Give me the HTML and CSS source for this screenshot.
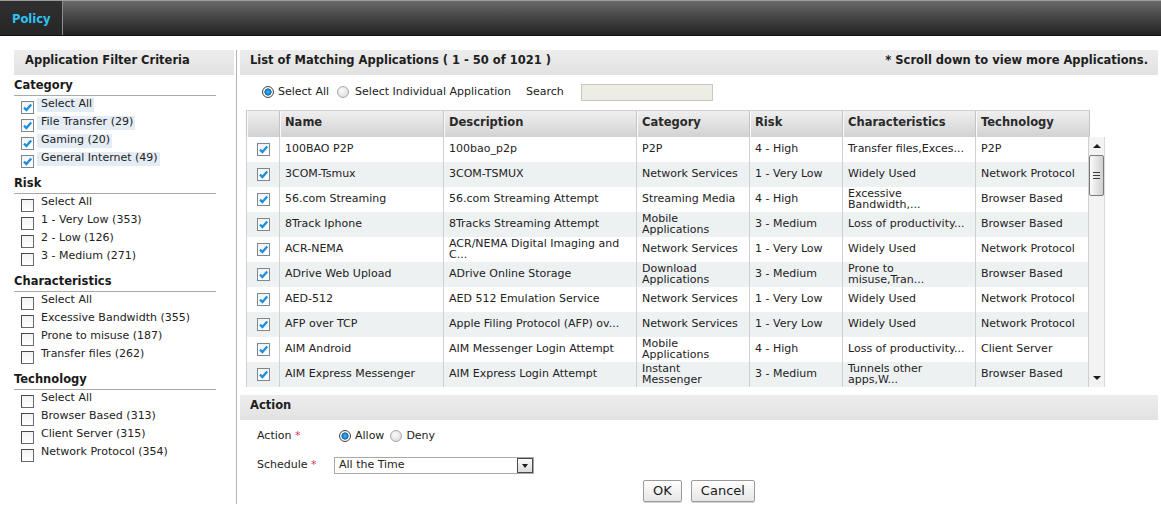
FILE: index.html
```html
<!DOCTYPE html>
<html lang="en">
<head>
<meta charset="utf-8">
<title>Policy</title>
<link rel="stylesheet" href="styles.css">
</head>
<body>
<header class="topbar">
  <div class="tab">Policy</div>
  <div class="topbar-fill"></div>
</header>
<main class="main">
  <aside class="filters">
    <div class="panel-head">Application Filter Criteria</div>

    <section class="group">
      <h3 class="group-title">Category</h3>
      <ul class="opts">
        <li class="opt"><span class="cb on"><svg viewBox="0 0 11 11" width="11" height="11"><path d="M2 5.6 L4.4 8 L9.2 2.6" /></svg></span><span class="lbl hl">Select All</span></li>
        <li class="opt"><span class="cb on"><svg viewBox="0 0 11 11" width="11" height="11"><path d="M2 5.6 L4.4 8 L9.2 2.6" /></svg></span><span class="lbl hl">File Transfer (29)</span></li>
        <li class="opt"><span class="cb on"><svg viewBox="0 0 11 11" width="11" height="11"><path d="M2 5.6 L4.4 8 L9.2 2.6" /></svg></span><span class="lbl hl">Gaming (20)</span></li>
        <li class="opt"><span class="cb on"><svg viewBox="0 0 11 11" width="11" height="11"><path d="M2 5.6 L4.4 8 L9.2 2.6" /></svg></span><span class="lbl hl">General Internet (49)</span></li>
      </ul>
    </section>

    <section class="group">
      <h3 class="group-title">Risk</h3>
      <ul class="opts">
        <li class="opt"><span class="cb"></span><span class="lbl">Select All</span></li>
        <li class="opt"><span class="cb"></span><span class="lbl">1 - Very Low (353)</span></li>
        <li class="opt"><span class="cb"></span><span class="lbl">2 - Low (126)</span></li>
        <li class="opt"><span class="cb"></span><span class="lbl">3 - Medium (271)</span></li>
      </ul>
    </section>

    <section class="group">
      <h3 class="group-title">Characteristics</h3>
      <ul class="opts">
        <li class="opt"><span class="cb"></span><span class="lbl">Select All</span></li>
        <li class="opt"><span class="cb"></span><span class="lbl">Excessive Bandwidth (355)</span></li>
        <li class="opt"><span class="cb"></span><span class="lbl">Prone to misuse (187)</span></li>
        <li class="opt"><span class="cb"></span><span class="lbl">Transfer files (262)</span></li>
      </ul>
    </section>

    <section class="group">
      <h3 class="group-title">Technology</h3>
      <ul class="opts">
        <li class="opt"><span class="cb"></span><span class="lbl">Select All</span></li>
        <li class="opt"><span class="cb"></span><span class="lbl">Browser Based (313)</span></li>
        <li class="opt"><span class="cb"></span><span class="lbl">Client Server (315)</span></li>
        <li class="opt"><span class="cb"></span><span class="lbl">Network Protocol (354)</span></li>
      </ul>
    </section>
  </aside>

  <div class="content">
    <div class="panel-head split">
      <span>List of Matching Applications ( 1 - 50 of 1021 )</span>
      <span>* Scroll down to view more Applications.</span>
    </div>

    <div class="selrow">
      <span class="radio on"></span><span class="rlbl">Select All</span>
      <span class="radio second"></span><span class="rlbl">Select Individual Application</span>
      <span class="search-lbl">Search</span>
      <span class="search-box"></span>
    </div>

    <div class="grid">
      <div class="thead">
        <div class="th"></div>
        <div class="th">Name</div>
        <div class="th">Description</div>
        <div class="th">Category</div>
        <div class="th">Risk</div>
        <div class="th">Characteristics</div>
        <div class="th last">Technology</div>
      </div>
      <div class="tbody">
        <div class="rows">
          <div class="row">
            <div class="cell ck"><span class="cb on"><svg viewBox="0 0 11 11" width="11" height="11"><path d="M2 5.6 L4.4 8 L9.2 2.6" /></svg></span></div>
            <div class="cell"><span>100BAO P2P</span></div>
            <div class="cell"><span>100bao_p2p</span></div>
            <div class="cell"><span>P2P</span></div>
            <div class="cell"><span>4 - High</span></div>
            <div class="cell"><span>Transfer files,Exces...</span></div>
            <div class="cell"><span>P2P</span></div>
          </div>
          <div class="row">
            <div class="cell ck"><span class="cb on"><svg viewBox="0 0 11 11" width="11" height="11"><path d="M2 5.6 L4.4 8 L9.2 2.6" /></svg></span></div>
            <div class="cell"><span>3COM-Tsmux</span></div>
            <div class="cell"><span>3COM-TSMUX</span></div>
            <div class="cell"><span>Network Services</span></div>
            <div class="cell"><span>1 - Very Low</span></div>
            <div class="cell"><span>Widely Used</span></div>
            <div class="cell"><span>Network Protocol</span></div>
          </div>
          <div class="row">
            <div class="cell ck"><span class="cb on"><svg viewBox="0 0 11 11" width="11" height="11"><path d="M2 5.6 L4.4 8 L9.2 2.6" /></svg></span></div>
            <div class="cell"><span>56.com Streaming</span></div>
            <div class="cell"><span>56.com Streaming Attempt</span></div>
            <div class="cell"><span>Streaming Media</span></div>
            <div class="cell"><span>4 - High</span></div>
            <div class="cell"><span>Excessive<br>Bandwidth,...</span></div>
            <div class="cell"><span>Browser Based</span></div>
          </div>
          <div class="row">
            <div class="cell ck"><span class="cb on"><svg viewBox="0 0 11 11" width="11" height="11"><path d="M2 5.6 L4.4 8 L9.2 2.6" /></svg></span></div>
            <div class="cell"><span>8Track Iphone</span></div>
            <div class="cell"><span>8Tracks Streaming Attempt</span></div>
            <div class="cell"><span>Mobile<br>Applications</span></div>
            <div class="cell"><span>3 - Medium</span></div>
            <div class="cell"><span>Loss of productivity...</span></div>
            <div class="cell"><span>Browser Based</span></div>
          </div>
          <div class="row">
            <div class="cell ck"><span class="cb on"><svg viewBox="0 0 11 11" width="11" height="11"><path d="M2 5.6 L4.4 8 L9.2 2.6" /></svg></span></div>
            <div class="cell"><span>ACR-NEMA</span></div>
            <div class="cell"><span>ACR/NEMA Digital Imaging and<br>C...</span></div>
            <div class="cell"><span>Network Services</span></div>
            <div class="cell"><span>1 - Very Low</span></div>
            <div class="cell"><span>Widely Used</span></div>
            <div class="cell"><span>Network Protocol</span></div>
          </div>
          <div class="row">
            <div class="cell ck"><span class="cb on"><svg viewBox="0 0 11 11" width="11" height="11"><path d="M2 5.6 L4.4 8 L9.2 2.6" /></svg></span></div>
            <div class="cell"><span>ADrive Web Upload</span></div>
            <div class="cell"><span>ADrive Online Storage</span></div>
            <div class="cell"><span>Download<br>Applications</span></div>
            <div class="cell"><span>3 - Medium</span></div>
            <div class="cell"><span>Prone to<br>misuse,Tran...</span></div>
            <div class="cell"><span>Browser Based</span></div>
          </div>
          <div class="row">
            <div class="cell ck"><span class="cb on"><svg viewBox="0 0 11 11" width="11" height="11"><path d="M2 5.6 L4.4 8 L9.2 2.6" /></svg></span></div>
            <div class="cell"><span>AED-512</span></div>
            <div class="cell"><span>AED 512 Emulation Service</span></div>
            <div class="cell"><span>Network Services</span></div>
            <div class="cell"><span>1 - Very Low</span></div>
            <div class="cell"><span>Widely Used</span></div>
            <div class="cell"><span>Network Protocol</span></div>
          </div>
          <div class="row">
            <div class="cell ck"><span class="cb on"><svg viewBox="0 0 11 11" width="11" height="11"><path d="M2 5.6 L4.4 8 L9.2 2.6" /></svg></span></div>
            <div class="cell"><span>AFP over TCP</span></div>
            <div class="cell"><span>Apple Filing Protocol (AFP) ov...</span></div>
            <div class="cell"><span>Network Services</span></div>
            <div class="cell"><span>1 - Very Low</span></div>
            <div class="cell"><span>Widely Used</span></div>
            <div class="cell"><span>Network Protocol</span></div>
          </div>
          <div class="row">
            <div class="cell ck"><span class="cb on"><svg viewBox="0 0 11 11" width="11" height="11"><path d="M2 5.6 L4.4 8 L9.2 2.6" /></svg></span></div>
            <div class="cell"><span>AIM Android</span></div>
            <div class="cell"><span>AIM Messenger Login Attempt</span></div>
            <div class="cell"><span>Mobile<br>Applications</span></div>
            <div class="cell"><span>4 - High</span></div>
            <div class="cell"><span>Loss of productivity...</span></div>
            <div class="cell"><span>Client Server</span></div>
          </div>
          <div class="row">
            <div class="cell ck"><span class="cb on"><svg viewBox="0 0 11 11" width="11" height="11"><path d="M2 5.6 L4.4 8 L9.2 2.6" /></svg></span></div>
            <div class="cell"><span>AIM Express Messenger</span></div>
            <div class="cell"><span>AIM Express Login Attempt</span></div>
            <div class="cell"><span>Instant<br>Messenger</span></div>
            <div class="cell"><span>3 - Medium</span></div>
            <div class="cell"><span>Tunnels other<br>apps,W...</span></div>
            <div class="cell"><span>Browser Based</span></div>
          </div>
        </div>
        <div class="vscroll">
          <div class="sb-btn"><span class="tri-up"></span></div>
          <div class="sb-thumb"><span class="grip"></span></div>
          <div class="sb-track"></div>
          <div class="sb-btn"><span class="tri-down"></span></div>
        </div>
      </div>
    </div>

    <div class="panel-head action-head">Action</div>

    <div class="form">
      <div class="frow">
        <span class="flabel">Action <span class="req">*</span></span>
        <span class="radios">
          <span class="radio on sm"></span><span class="rlbl">Allow</span>
          <span class="radio sm deny"></span><span class="rlbl">Deny</span>
        </span>
      </div>
      <div class="frow sched">
        <span class="flabel">Schedule <span class="req">*</span></span>
        <span class="select"><span class="select-val">All the Time</span><span class="select-btn"><span class="tri-down"></span></span></span>
      </div>
      <div class="buttons">
        <span class="btn">OK</span>
        <span class="btn">Cancel</span>
      </div>
    </div>
  </div>
</main>
</body>
</html>
```

FILE: styles.css
```css
* { box-sizing: border-box; }

html, body { margin: 0; padding: 0; }

body {
  width: 1161px;
  height: 517px;
  overflow: hidden;
  background: #fff;
  color: #222;
  font-family: "DejaVu Sans", sans-serif;
  font-size: 11px;
  line-height: 1.2;
}

/* ---------- top bar ---------- */
.topbar {
  display: flex;
  height: 36px;
  border-top: 1px solid #9a9a9a;
  border-bottom: 1px solid #101010;
  background: linear-gradient(#6a6a6a, #474747 45%, #2c2c2c 85%, #222);
}
.tab {
  width: 63px;
  padding: 2px 0 0 12px;
  background: linear-gradient(#303030, #262626);
  border-right: 1px solid #8e8e8e;
  color: #2dc4f4;
  font-weight: bold;
  font-size: 11.5px;
  line-height: 32px;
}
.topbar-fill { flex: 1; }

/* ---------- layout ---------- */
.main {
  display: flex;
  padding-top: 14px;
}
.filters {
  width: 237px;
  padding: 0 2px 0 14px;
  border-right: 1px solid #b4b4b4;
}
.content {
  width: 918px;
  margin-left: 3px;
  padding-bottom: 2px;
}

.panel-head {
  height: 25px;
  padding: 0 10px 4px 11px;
  background: linear-gradient(#ededed, #e2e2e2);
  font-weight: bold;
  font-size: 11.5px;
  line-height: 21px;
  color: #1e1e1e;
}
.panel-head.split {
  display: flex;
  justify-content: space-between;
  padding-left: 10px;
}
.action-head {
  margin-top: 8px;
  padding-left: 10px;
}

/* ---------- filter groups ---------- */
.group { margin: 6px 18px 0 0; }
.group:first-of-type { margin-top: 1px; }
.group-title {
  margin: 0;
  font-size: 11.5px;
  font-weight: bold;
  line-height: 16px;
  padding: 1px 0 2px;
  border-bottom: 1px solid #a9a9a9;
  color: #1a1a1a;
}
.opts { list-style: none; margin: 0; padding: 0; }
.opt {
  display: flex;
  align-items: flex-start;
  height: 18px;
  padding-left: 7px;
}
.opt .cb { margin-top: 5px; }
.lbl {
  margin: 2px 0 0 3px;
  padding: 0 2px 2px 4px;
  line-height: 12px;
  white-space: nowrap;
}
.lbl.hl { background: #e4ecf5; }

/* ---------- checkbox ---------- */
.cb {
  display: inline-flex;
  align-items: center;
  justify-content: center;
  flex: none;
  width: 13px;
  height: 13px;
  border: 1px solid #4a4a4a;
  border-right-color: #6a6a6a;
  border-bottom-color: #6a6a6a;
  background: linear-gradient(#f3f3f3, #fff);
}
.cb.on { border-color: #7d8790; }
.cb svg path {
  fill: none;
  stroke: #1b8fdd;
  stroke-width: 2.3;
}

/* ---------- radios ---------- */
.radio {
  display: inline-block;
  flex: none;
  width: 12px;
  height: 12px;
  border-radius: 50%;
  border: 1px solid #a8a8a8;
  background: radial-gradient(circle at 40% 35%, #fafafa, #d8d8d8);
}
.radio.on {
  border-color: #444;
  background: radial-gradient(circle at 50% 50%, #49b2f2 0, #1a7fc8 2.6px, #0d5a98 3.3px, #ffffff 3.9px, #e8e8e8 6px);
}

.selrow {
  display: flex;
  align-items: center;
  height: 18px;
  margin-top: 8px;
  padding-left: 22px;
}
.rlbl { margin-left: 4px; white-space: nowrap; }
.radio.second { margin-left: 8px; }
.selrow .radio.second + .rlbl { margin-left: 6px; }
.search-lbl { margin-left: 15px; }
.search-box {
  width: 132px;
  height: 17px;
  margin-left: 17px;
  border: 1px solid #c7c7bf;
  background: #ededE6;
}

/* ---------- grid ---------- */
.grid { margin: 9px 0 0 6px; }
.thead {
  display: grid;
  grid-template-columns: 33px 164px 193px 113px 93px 133px 115px;
  width: 844px;
  height: 27px;
  border-top: 1px solid #cfcfcf;
  background: linear-gradient(#efefef, #dedede 60%, #d2d2d2);
}
.th {
  border-left: 1px solid #c4c4c4;
  box-shadow: inset 1px 0 0 #fbfbfb;
  padding-left: 5px;
  font-weight: bold;
  font-size: 11.5px;
  line-height: 22px;
  color: #2a2a2a;
  white-space: nowrap;
}
.th.last { border-right: 1px solid #c4c4c4; }

.tbody {
  display: flex;
  height: 250px;
}
.rows {
  width: 842px;
  height: 250px;
  overflow: hidden;
}
.row {
  display: grid;
  grid-template-columns: 33px 164px 193px 113px 93px 133px 113px;
  height: 25px;
  background: #fff;
}
.row:nth-child(even) { background: #eef1f2; }
.cell {
  display: flex;
  align-items: center;
  border-left: 1px solid #d0d0d0;
  padding: 0 3px 2px 5px;
  line-height: 11px;
  white-space: nowrap;
  overflow: hidden;
}
.cell.ck { padding: 0 0 0 10px; }

/* ---------- scrollbar ---------- */
.vscroll {
  display: flex;
  flex-direction: column;
  width: 17px;
  height: 250px;
  border-left: 1px solid #cfcfcf;
  border-right: 1px solid #dadada;
  background: #f3f3f3;
}
.sb-btn {
  display: flex;
  align-items: center;
  justify-content: center;
  height: 18px;
}
.tri-up {
  width: 0; height: 0;
  border-left: 4px solid transparent;
  border-right: 4px solid transparent;
  border-bottom: 4px solid #1c1c1c;
}
.tri-down {
  width: 0; height: 0;
  border-left: 4px solid transparent;
  border-right: 4px solid transparent;
  border-top: 4px solid #1c1c1c;
}
.sb-thumb {
  display: flex;
  align-items: center;
  justify-content: center;
  height: 41px;
  border: 1px solid #7a7a7a;
  border-radius: 2px;
  background: linear-gradient(90deg, #fbfbfb, #e6e6e6 50%, #cfcfcf);
}
.grip {
  width: 7px;
  height: 7px;
  background: repeating-linear-gradient(#3a3a3a 0 1px, transparent 1px 3px);
}
.sb-track { flex: 1; }

/* ---------- action form ---------- */
.form { padding-left: 17px; }
.frow {
  display: flex;
  align-items: center;
  height: 18px;
  margin-top: 7px;
}
.frow.sched { height: 20px; margin-top: 10px; }
.flabel { width: 77px; white-space: nowrap; }
.req { color: #e2354f; }
.radios { display: flex; align-items: center; margin-left: 5px; }
.radio.sm { width: 12px; height: 12px; }
.radios .rlbl { margin-left: 4px; }
.radio.deny { margin-left: 6px; }

.select {
  display: flex;
  align-items: center;
  width: 200px;
  height: 17px;
  border: 1px solid #a9a9a9;
  background: #fff;
}
.select-val { flex: 1; padding-left: 4px; }
.select-btn {
  display: flex;
  align-items: center;
  justify-content: center;
  width: 16px;
  height: 15px;
  border: 1px solid #4a4a4a;
  background: linear-gradient(#fafafa, #dcdcdc);
}
.select-btn .tri-down {
  border-left-width: 3.5px;
  border-right-width: 3.5px;
  border-top-width: 4px;
  margin-top: 2px;
}

.buttons {
  display: flex;
  justify-content: center;
  gap: 9px;
  margin-top: 5px;
  padding-right: 17px;
}
.btn {
  display: inline-block;
  height: 22px;
  padding: 0 9px;
  border: 1px solid #9a9a9a;
  border-radius: 2px;
  background: linear-gradient(#fefefe, #e6e6e6);
  box-shadow: 0 1px 0 #d4d4d4;
  font-size: 13px;
  line-height: 20px;
  color: #1a1a1a;
}
```
